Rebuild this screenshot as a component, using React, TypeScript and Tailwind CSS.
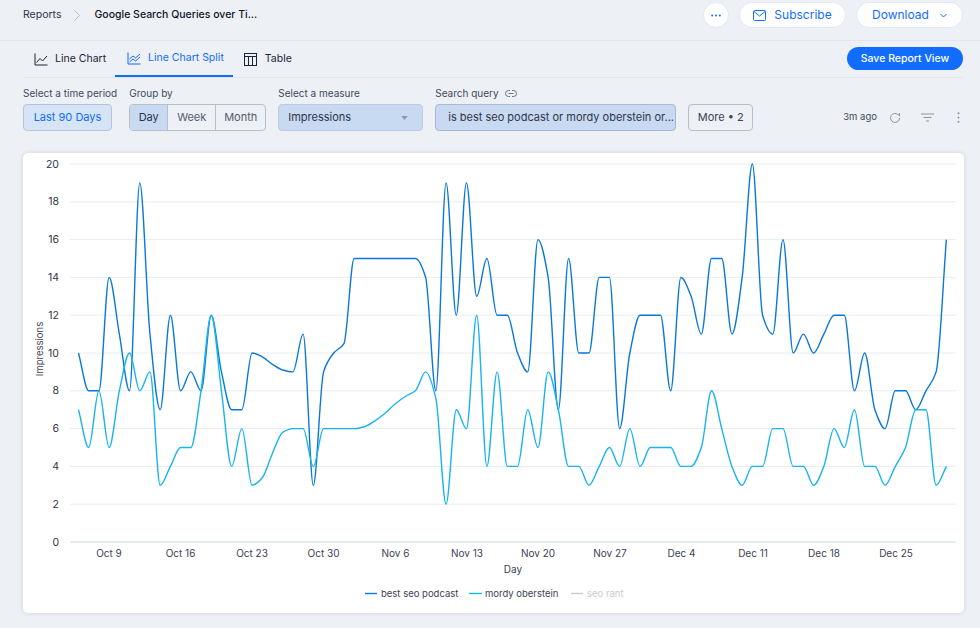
const BEST = [10,8,8,14,11,8,19,11,7,12,8,9,8,12,9,7,7,10,9.8,9.4,9.1,9,11,3,9,10,10.5,15,15,15,15,15,15,15,14,8,19,12,19,13,15,12,12,10,9,16,14,7,15,10,10,14,14,6,10,12,12,12,8,14,13,11,15,15,11,14,20,12,11,16,10,11,10,11,12,12,8,10,7,6,8,8,7,8,9,16]
const MORDY = [7,5,8,5,8,10,8,9,3,4,5,5,8,12,8,4,6,3,3.4,4.7,5.8,6,6,4,6,6,6,6,6.1,6.4,6.8,7.3,7.7,8,9,7.6,2,7,6,12,4,9,4,4,7,5,9,7,4,4,3,4,5,4,6,4,5,5,5,4,4,5,8,6,4,3,4,4,6,6,4,4,3,4,6,5,7,4,4,3,4,5,7,7,3,4]

const X0 = 55.5
const STEP = 10.21
const Y0 = 389
const UNIT = 18.9

const px = (i: number) => X0 + i * STEP
const py = (v: number) => Y0 - v * UNIT

// monotone cubic, same shape the chart lib draws
function linePath(vals: number[]) {
  const n = vals.length
  const s: number[] = []
  for (let i = 0; i < n - 1; i++) s.push(vals[i + 1] - vals[i])
  const m: number[] = [s[0]]
  for (let i = 1; i < n - 1; i++) {
    if (s[i - 1] * s[i] <= 0) m.push(0)
    else m.push((2 * s[i - 1] * s[i]) / (s[i - 1] + s[i]))
  }
  m.push(s[n - 2])
  let d = `M${px(0)} ${py(vals[0])}`
  for (let i = 0; i < n - 1; i++) {
    const c1 = vals[i] + m[i] / 3
    const c2 = vals[i + 1] - m[i + 1] / 3
    d += `C${px(i) + STEP / 3} ${py(c1)} ${px(i + 1) - STEP / 3} ${py(c2)} ${px(i + 1)} ${py(vals[i + 1])}`
  }
  return d
}

const TICKS = [
  ['Oct 9', 86], ['Oct 16', 157.5], ['Oct 23', 229], ['Oct 30', 300.5], ['Nov 6', 372.5], ['Nov 13', 444],
  ['Nov 20', 515], ['Nov 27', 587], ['Dec 4', 658.5], ['Dec 11', 730], ['Dec 18', 801], ['Dec 25', 873],
] as const

function LineIcon({ className }: { className?: string }) {
  return (
    <svg viewBox="0 0 14 13" className={className} fill="none" stroke="currentColor" strokeWidth="1">
      <path d="M1 .5v11.5h12.5" />
      <path d="M2.5 9.5 6 5.5l2.5 2.5L13 3" />
    </svg>
  )
}

function SplitIcon({ className }: { className?: string }) {
  return (
    <svg viewBox="0 0 14 13" className={className} fill="none" stroke="currentColor" strokeWidth="1">
      <path d="M1 .5v11.5h12.5" />
      <path d="M2.5 7 6 4l2.5 2L13 2" />
      <path d="M2.5 10 6 7l2.5 2L13 5" />
    </svg>
  )
}

function TableIcon() {
  return (
    <svg viewBox="0 0 13 13" className="h-[13px] w-[13px] text-[#1b2438]" fill="none" stroke="currentColor" strokeWidth="1">
      <rect x=".5" y=".5" width="12" height="12" />
      <path d="M.5 3.5h12M4.5 3.5v9M8.5 3.5v9" />
    </svg>
  )
}

function Field({ label, children }: { label: React.ReactNode; children: React.ReactNode }) {
  return (
    <div className="flex flex-col">
      <div className="flex h-[14px] items-center text-[10px] leading-none text-[#434a5c]">{label}</div>
      <div className="mt-[4px]">{children}</div>
    </div>
  )
}

function Chart() {
  return (
    <svg viewBox="0 0 941 460" className="block h-[460px] w-[941px]" style={{ fontFamily: 'Inter, sans-serif' }}>
      {[20, 18, 16, 14, 12, 10, 8, 6, 4, 2].map(v => (
        <line key={v} x1="47" x2="933" y1={py(v)} y2={py(v)} stroke="#e9ecf1" strokeWidth="1" />
      ))}
      <line x1="47" x2="933" y1={Y0} y2={Y0} stroke="#dfe5f0" strokeWidth="1.5" />
      {[20, 18, 16, 14, 12, 10, 8, 6, 4, 2, 0].map(v => (
        <text key={v} x="36" y={py(v) + 3.5} textAnchor="end" fontSize="10.5" fill="#2f3648">{v}</text>
      ))}
      {TICKS.map(([t, x]) => (
        <text key={t} x={x} y="404" textAnchor="middle" fontSize="10" fill="#3b4254">{t}</text>
      ))}
      <text x="490" y="420" textAnchor="middle" fontSize="10" fill="#3b4254">Day</text>
      <text transform="translate(20 196) rotate(-90)" textAnchor="middle" fontSize="9.5" fill="#3b4254">Impressions</text>

      <path d={linePath(BEST)} fill="none" stroke="#0a78d8" strokeWidth="1.4" />
      <path d={linePath(MORDY)} fill="none" stroke="#17b4ee" strokeWidth="1.4" />

      <line x1="342" x2="354" y1="440.5" y2="440.5" stroke="#0a78d8" strokeWidth="1.4" />
      <text x="358" y="444" fontSize="9.5" fill="#3b4254">best seo podcast</text>
      <line x1="446" x2="459" y1="440.5" y2="440.5" stroke="#17b4ee" strokeWidth="1.4" />
      <text x="462" y="444" fontSize="9.5" fill="#3b4254">mordy oberstein</text>
      <line x1="548" x2="560" y1="440.5" y2="440.5" stroke="#c9c9c9" strokeWidth="1.4" />
      <text x="564" y="444" fontSize="9.5" fill="#c9ccd2">seo rant</text>
    </svg>
  )
}

export default function App() {
  return (
    <div className="h-[628px] w-[980px] overflow-hidden bg-[#edf0f5] text-[#1b2438]" style={{ fontFamily: 'Inter, sans-serif' }}>
      {/* Header */}
      <header className="flex h-[41px] items-start justify-between border-b border-[#e3e6eb] pl-[23px] pr-[17px] pt-[2px]">
        <div className="flex h-[26px] items-center text-[10.5px]">
          <span className="text-[#2f3648]">Reports</span>
          <svg viewBox="0 0 6 11" className="ml-[13px] mr-[14px] h-[11px] w-[6px] text-[#b6bcc8]" fill="none" stroke="currentColor" strokeWidth="1">
            <path d="m.5.5 5 5-5 5" />
          </svg>
          <span className="font-medium text-[#0f1728]">Google Search Queries over Ti...</span>
        </div>
        <div className="flex items-center gap-[10px]">
          <button className="flex h-[26px] w-[26px] items-center justify-center rounded-full border border-[#dfe9fb] bg-white">
            <svg viewBox="0 0 10 3" className="h-[3px] w-[10px] text-[#116dff]" fill="currentColor">
              <circle cx="1.2" cy="1.5" r="1" /><circle cx="5" cy="1.5" r="1" /><circle cx="8.8" cy="1.5" r="1" />
            </svg>
          </button>
          <button className="flex h-[26px] w-[107px] items-center justify-center gap-[8px] rounded-full border border-[#dfe9fb] bg-white text-[12px] text-[#116dff]">
            <svg viewBox="0 0 13 11" className="h-[11px] w-[13px]" fill="none" stroke="currentColor" strokeWidth="1">
              <rect x=".5" y=".5" width="12" height="10" rx="1" />
              <path d="m1 1.5 5.5 4.5L12 1.5" />
            </svg>
            Subscribe
          </button>
          <button className="flex h-[26px] w-[107px] items-center justify-center gap-[11px] rounded-full border border-[#dfe9fb] bg-white text-[12px] text-[#116dff]">
            Download
            <svg viewBox="0 0 7 5" className="h-[5px] w-[7px]" fill="none" stroke="currentColor" strokeWidth="1">
              <path d="m.5 1 3 3 3-3" />
            </svg>
          </button>
        </div>
      </header>

      {/* Tabs */}
      <div className="mx-[17px] ml-[23px] flex h-[37px] items-start justify-between border-b border-[#e3e6eb]">
        <div className="flex h-[36px] items-stretch text-[10.5px]">
          <div className="flex items-center gap-[7px] pl-[11px] pr-[9px] text-[#1b2438]">
            <LineIcon className="h-[13px] w-[14px]" />
            Line Chart
          </div>
          <div className="flex items-center gap-[7px] border-b-2 border-[#116dff] pl-[12px] pr-[9px] text-[#116dff]">
            <SplitIcon className="h-[13px] w-[14px]" />
            Line Chart Split
          </div>
          <div className="flex items-center gap-[8px] pl-[11px] text-[#1b2438]">
            <TableIcon />
            Table
          </div>
        </div>
        <button className="mt-[6px] h-[23px] w-[116px] rounded-full bg-[#116dff] text-[10.5px] font-medium text-white">
          Save Report View
        </button>
      </div>

      {/* Filters */}
      <div className="mx-[17px] ml-[23px] mt-[8px] flex items-end text-[11px]">
        <Field label="Select a time period">
          <div className="flex h-[27px] w-[89px] items-center justify-center rounded-[4px] border border-[#b8c4d6] bg-[#d6e4f7] text-[#116dff]">Last 90 Days</div>
        </Field>
        <div className="ml-[12px]">
          <Field label="Group by">
            <div className="flex h-[27px] w-[137px] overflow-hidden rounded-[4px] border border-[#b9bfc9] text-[#555c6e]">
              <div className="flex w-[38px] items-center justify-center border-r border-[#b9bfc9] bg-[#c8d9f2] text-[#2f3648]">Day</div>
              <div className="flex w-[48px] items-center justify-center border-r border-[#b9bfc9]">Week</div>
              <div className="flex flex-1 items-center justify-center">Month</div>
            </div>
          </Field>
        </div>
        <div className="ml-[12px]">
          <Field label="Select a measure">
            <div className="flex h-[27px] w-[145px] items-center justify-between rounded-[4px] border border-[#bccbe2] bg-[#c8d9f2] pl-[9px] pr-[14px] text-[#2f3648]">
              Impressions
              <svg viewBox="0 0 8 5" className="h-[4px] w-[7px] text-[#8d96a8]" fill="currentColor"><path d="M0 0h8L4 5z" /></svg>
            </div>
          </Field>
        </div>
        <div className="ml-[12px]">
          <Field label={
            <span className="flex items-center gap-[6px]">
              Search query
              <svg viewBox="0 0 12 7" className="h-[7px] w-[12px] text-[#6a7183]" fill="none" stroke="currentColor" strokeWidth="1">
                <path d="M5 .5H3.5a3 3 0 0 0 0 6H5M7 .5h1.500a3 3 0 0 1 0 6H7M3.500 3.500h5" />
              </svg>
            </span>
          }>
            <div className="flex h-[27px] w-[241px] items-center rounded-[4px] border border-[#a9b8cf] bg-[#c8d9f2] pl-[12px] text-[#2f3648]">
              is best seo podcast or mordy oberstein or...
            </div>
          </Field>
        </div>
        <button className="ml-[12px] flex h-[27px] w-[65px] items-center justify-center rounded-[4px] border border-[#b9bfc9] text-[#3b4254]">More • 2</button>
        <div className="flex h-[27px] flex-1 items-center pl-[90px] text-[9.500px] text-[#434a5c]">
          3m ago
          <svg viewBox="0 0 12 12" className="ml-[12px] h-[12px] w-[12px] text-[#8b92a3]" fill="none" stroke="currentColor" strokeWidth="1">
            <path d="M10.500 6a4.500 4.500 0 1 1-1.300-3.200L10.500 4V1" />
          </svg>
          <svg viewBox="0 0 13 9" className="ml-[20px] h-[9px] w-[13px] text-[#8b92a3]" fill="none" stroke="currentColor" strokeWidth="1">
            <path d="M0 1h13M2.500 4.500h8M5 8h3" />
          </svg>
          <svg viewBox="0 0 3 11" className="ml-[23px] h-[11px] w-[3px] text-[#8b92a3]" fill="currentColor">
            <circle cx="1.500" cy="1.200" r="1" /><circle cx="1.500" cy="5.500" r="1" /><circle cx="1.500" cy="9.800" r="1" />
          </svg>
        </div>
      </div>

      {/* Chart card */}
      <div className="ml-[23px] mt-[22px] w-[941px] rounded-[5px] bg-white shadow-[0_0_4px_rgba(22,45,61,0.14)]">
        <Chart />
      </div>
    </div>
  )
}
